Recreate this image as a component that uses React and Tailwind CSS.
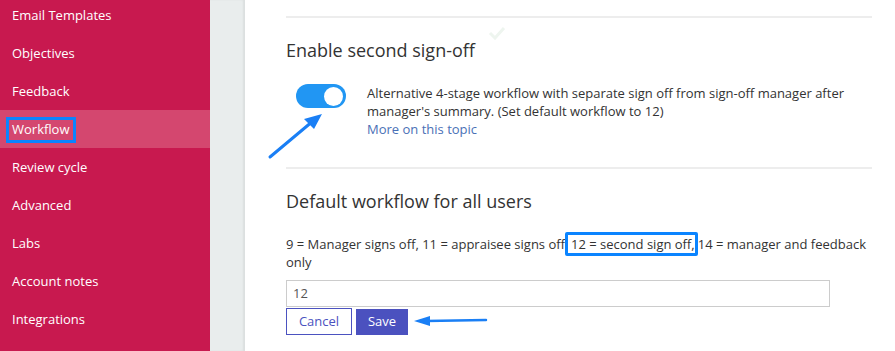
import React from "react"

const navItems = [
  "Email Templates",
  "Objectives",
  "Feedback",
  "Workflow",
  "Review cycle",
  "Advanced",
  "Labs",
  "Account notes",
  "Integrations",
]

export default function App() {
  return (
    <div className="relative flex h-[351px] w-[895px] overflow-hidden bg-white font-['Open_Sans',sans-serif] text-[13px] text-[#333]">
      {/* sidebar */}
      <nav className="flex w-[210px] shrink-0 flex-col bg-[#c8194f]">
        <div className="-mt-[4px]">
          {navItems.map((item) =>
            item === "Workflow" ? (
              <div key={item} className="flex h-[38px] items-center bg-[#d4476f] pl-[6px] pt-[1px]">
                <span className="flex h-[26px] items-center border-[3px] border-[#0a84ff] px-[3px] text-white">
                  {item}
                </span>
              </div>
            ) : (
              <div key={item} className="flex h-[38px] items-center pl-[12px] pt-[2px] text-white">
                {item}
              </div>
            ),
          )}
        </div>
      </nav>

      {/* gutter */}
      <div className="w-[35px] shrink-0 bg-[#e9eded] shadow-[inset_-2px_0_2px_rgba(0,0,0,0.06)]" />

      {/* main */}
      <main className="flex-1 pl-[41px] pr-[23px]">
        <div className="mt-[16px] h-[2px] bg-[#ededed]" />

        <section>
          <h2 className="mt-[20px] h-[24px] text-[18px] leading-[24px] text-[#333]">Enable second sign-off</h2>
          <div className="mt-[22px] flex items-start">
            <div className="ml-[10px] flex h-[24px] w-[50px] shrink-0 items-center justify-end rounded-full bg-[#2196f3] pr-[3px]">
              <div className="h-[19px] w-[19px] rounded-full bg-white" />
            </div>
            <div className="ml-[21px] leading-[18px]">
              <p>
                Alternative 4-stage workflow with separate sign off from sign-off manager after manager's summary. (Set
                default workflow to 12)
              </p>
              <a className="text-[#4a70b6]">More on this topic</a>
            </div>
          </div>
        </section>

        <div className="mt-[29px] h-[2px] bg-[#ededed]" />

        <section>
          <h2 className="mt-[20px] h-[24px] text-[18px] leading-[24px] text-[#333]">Default workflow for all users</h2>
          <p className="mt-[22px] leading-[18px]">
            9 = Manager signs off, 11 = appraisee signs off
            <span className="rounded-[2px] border-[3px] border-[#0a84ff] pl-[3px] pr-0">12 = second sign off,</span>
            14 = manager and feedback only
          </p>
          <div className="mt-[9px] flex h-[27px] w-[544px] items-center border border-[#ccc] pl-[6px] text-[#555]">
            12
          </div>
          <div className="mt-[1px] flex items-end gap-[4px]">
            <button className="h-[27px] w-[66px] border border-[#4b52c0] bg-white text-[#4b52c0]">Cancel</button>
            <button className="h-[26px] w-[52px] bg-[#4b51bf] text-white">Save</button>
          </div>
        </section>
      </main>

      {/* faint check mark */}
      <svg className="absolute left-[488px] top-[26px]" width="18" height="14" viewBox="0 0 18 14">
        <path d="M2 7 L7 12 L16 2" fill="none" stroke="#eef5ef" strokeWidth="3" />
      </svg>

      {/* annotation arrows */}
      <svg className="absolute left-0 top-0" width="895" height="351" viewBox="0 0 895 351">
        <line x1="270" y1="157" x2="313" y2="121" stroke="#1a7ff5" strokeWidth="3" strokeLinecap="round" />
        <polygon points="322,114 304,119 314,129" fill="#1a7ff5" />
        <line x1="486" y1="320" x2="426" y2="321" stroke="#1a7ff5" strokeWidth="2.5" strokeLinecap="round" />
        <polygon points="414,321 430,316 430,326" fill="#1a7ff5" />
      </svg>
    </div>
  )
}
